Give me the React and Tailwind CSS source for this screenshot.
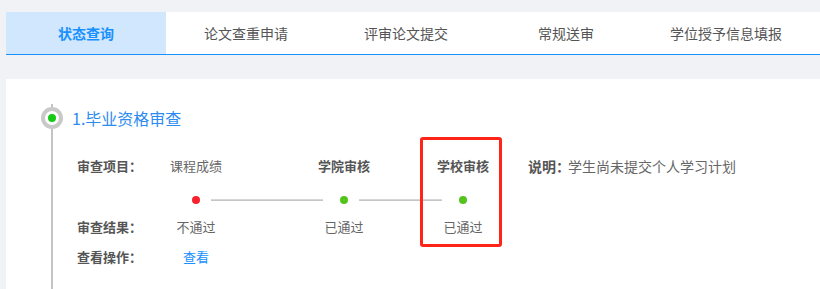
const tabs = ["状态查询", "论文查重申请", "评审论文提交", "常规送审", "学位授予信息填报"];

const Cell = ({ children, className = "" }) => (
  <div className={`w-[60px] shrink-0 text-center whitespace-nowrap ${className}`}>{children}</div>
);

const Dot = ({ color }) => (
  <div className={`w-[8px] h-[8px] rounded-full shrink-0 ${color}`} />
);

const Line = ({ width }) => (
  <div className={`h-[2px] shrink-0 bg-gradient-to-b from-[#e0e0e0] to-[#bdbdbd] ${width}`} />
);

const App = () => {
  return (
    <div className="w-[820px] h-[289px] overflow-hidden bg-[#f0f2f5] pl-[6px] pt-[12px] font-['Noto_Sans_CJK_SC','Microsoft_YaHei',sans-serif]">
      <div className="flex h-[43px] bg-white border-b border-[#1890ff]">
        {tabs.map((t, i) => (
          <div
            key={t}
            className={
              i === 0
                ? "w-[160px] flex items-center justify-center text-[14px] bg-[#d0e7fe] text-[#1890ff] font-bold"
                : "w-[160px] flex items-center justify-center text-[14px] text-[#555]"
            }
          >
            {t}
          </div>
        ))}
      </div>

      <div className="relative mt-[24px] h-[230px] bg-white flex pl-[35px]">
        {/* timeline */}
        <div className="flex flex-col items-center w-[22px] pt-[25px]">
          <div className="w-[2px] h-[3px] bg-[#c4c4c4]" />
          <div className="w-[22px] h-[22px] rounded-full border-[4px] border-[#c9c9c9] bg-white flex items-center justify-center shrink-0">
            <div className="w-[8px] h-[8px] rounded-full bg-[#16c916]" />
          </div>
          <div className="w-[2px] flex-1 bg-[#c4c4c4]" />
        </div>

        <div className="ml-[9px] pt-[28px] text-[13px] text-[#666]">
          <div className="h-[22px] flex items-center text-[16px] text-[#2d8cf0]">1.毕业资格审查</div>

          <div className="pl-[5px]">
            <div className="mt-[27px] h-[20px] flex items-center">
              <div className="w-[89px] shrink-0 font-bold text-[#555]">审查项目：</div>
              <Cell>课程成绩</Cell>
              <div className="w-[88px] shrink-0" />
              <Cell className="font-bold text-[#555]">学院审核</Cell>
              <div className="w-[59px] shrink-0" />
              <Cell className="font-bold text-[#555]">学校审核</Cell>
              <div className="w-[35px] shrink-0" />
              <div className="w-[40px] shrink-0 whitespace-nowrap text-[14px] font-bold text-[#555]">说明：</div>
              <div className="whitespace-nowrap text-[14px]">学生尚未提交个人学习计划</div>
            </div>

            <div className="mt-[14px] h-[20px] flex items-center">
              <div className="w-[115px] shrink-0" />
              <Dot color="bg-[#f5222d]" />
              <div className="w-[11px] shrink-0" />
              <Line width="w-[112px]" />
              <div className="w-[17px] shrink-0" />
              <Dot color="bg-[#52c41a]" />
              <div className="w-[11px] shrink-0" />
              <Line width="w-[83px]" />
              <div className="w-[17px] shrink-0" />
              <Dot color="bg-[#52c41a]" />
            </div>

            <div className="mt-[7px] h-[20px] flex items-center">
              <div className="w-[89px] shrink-0 font-bold text-[#555]">审查结果：</div>
              <Cell>不通过</Cell>
              <div className="w-[88px] shrink-0" />
              <Cell>已通过</Cell>
              <div className="w-[59px] shrink-0" />
              <Cell>已通过</Cell>
            </div>

            <div className="mt-[10px] h-[20px] flex items-center">
              <div className="w-[89px] shrink-0 font-bold text-[#555]">查看操作：</div>
              <Cell className="text-[#1890ff]">查看</Cell>
            </div>
          </div>
        </div>

        {/* annotation box */}
        <div className="absolute left-[414px] top-[58px] w-[82px] h-[110px] border-[3px] border-[#ff2418] rounded-[3px]" />
      </div>
    </div>
  );
};

export default App;
